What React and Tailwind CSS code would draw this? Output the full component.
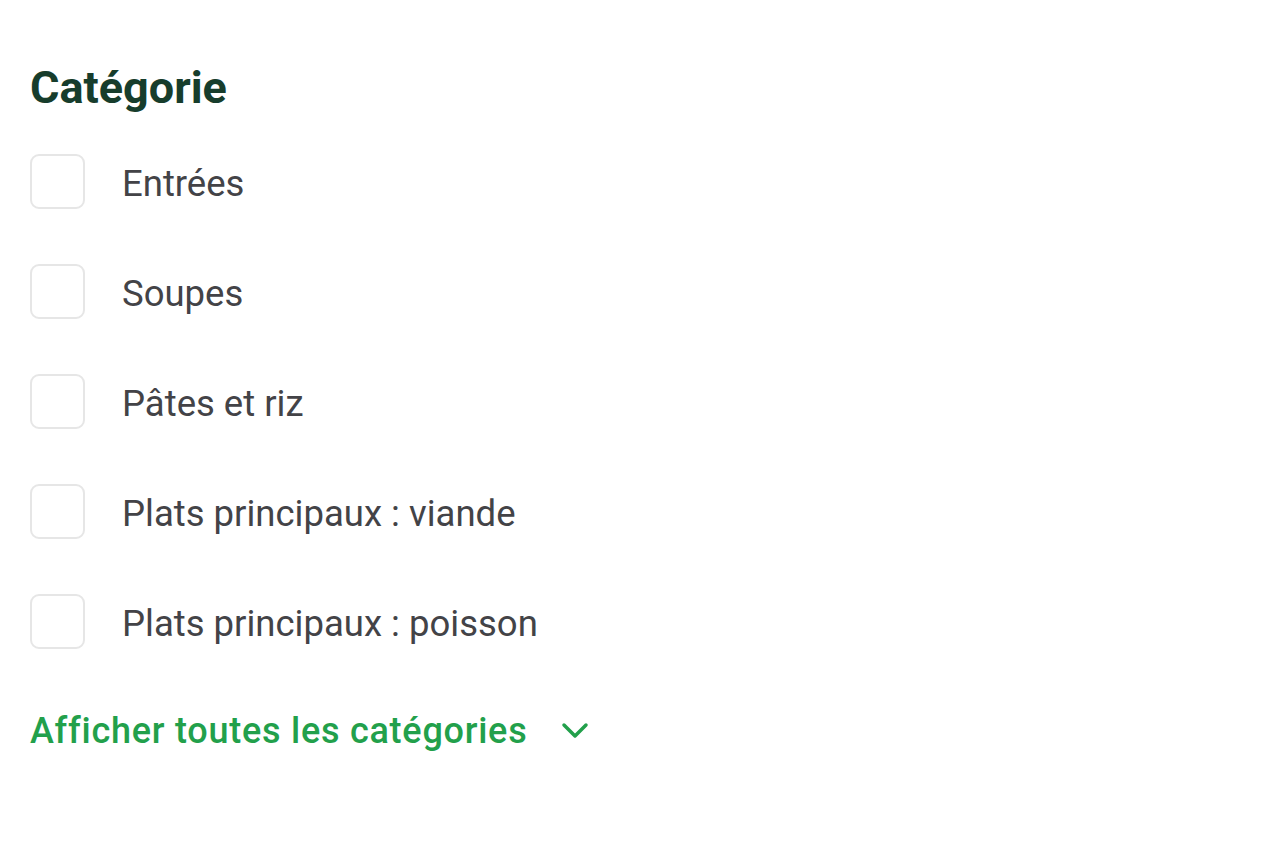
import React from "react";

const items = [
  "Entrées",
  "Soupes",
  "Pâtes et riz",
  "Plats principaux : viande",
  "Plats principaux : poisson",
];

export default function App() {
  return (
    <div className="min-h-[853px] w-[1280px] bg-white pl-[30px] pt-[60px]" style={{ fontFamily: "Roboto, 'Noto Sans', sans-serif" }}>
      <h2 className="text-[45px] font-bold leading-[56px] text-[#173d2c]">Catégorie</h2>
      <ul className="mt-[38px] flex flex-col gap-[55px]">
        {items.map((t) => (
          <li key={t} className="flex h-[55px] items-center gap-[37px]">
            <span className="h-[55px] w-[55px] shrink-0 rounded-[9px] border-2 border-[#e6e6e6] bg-white" />
            <span className="mt-[5px] text-[36.5px] leading-none text-[#434347]">{t}</span>
          </li>
        ))}
      </ul>
      <button className="mt-[62px] flex items-center gap-[34px] text-[36px] font-medium leading-[40px] tracking-[0.75px] text-[#22a04b]">
        <span>Afficher toutes les catégories</span>
        <svg width="28" height="20" viewBox="0 0 28 20" fill="none" stroke="#22a04b" strokeWidth="3.5" strokeLinecap="round" strokeLinejoin="round">
          <path d="M3 4 L14 15 L25 4" />
        </svg>
      </button>
    </div>
  );
}
